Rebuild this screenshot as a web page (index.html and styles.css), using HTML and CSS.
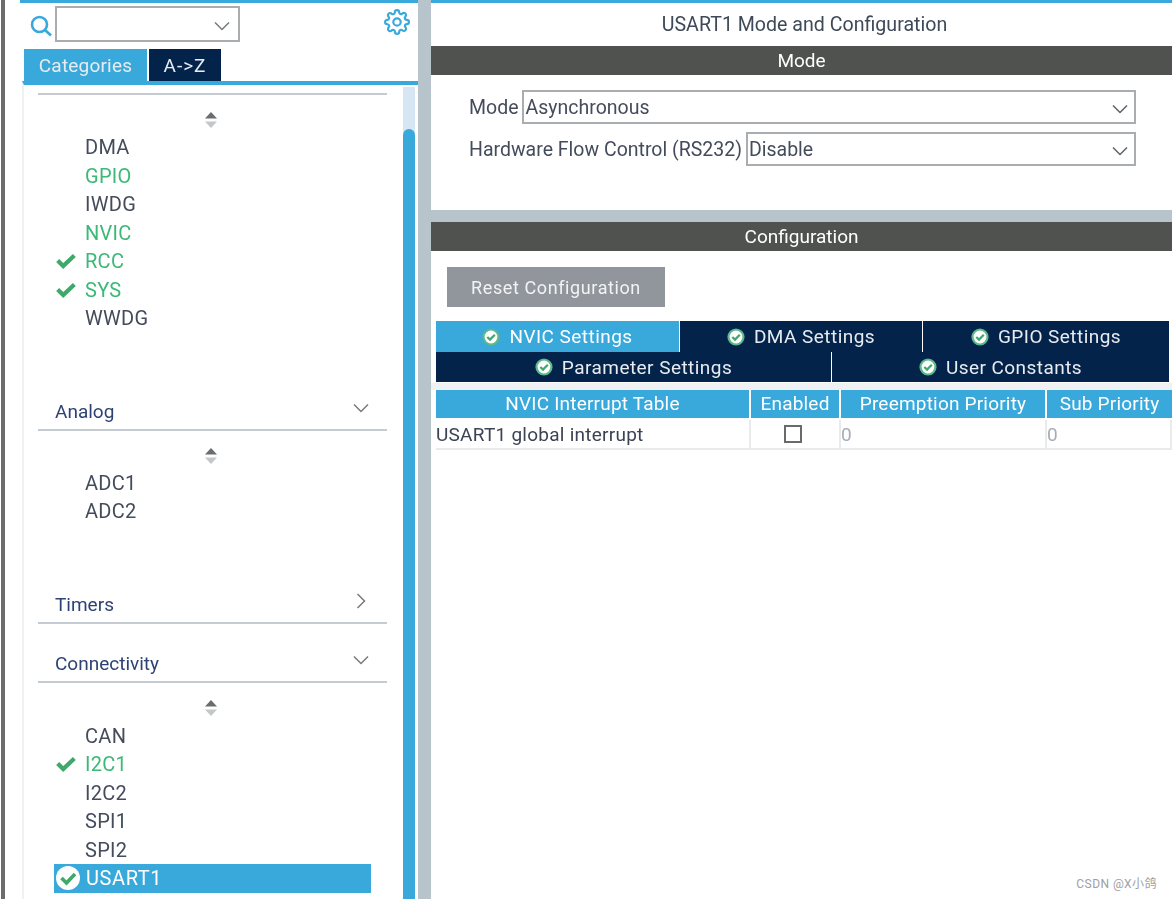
FILE: index.html
```html
<!DOCTYPE html>
<html lang="en">
<head>
<meta charset="utf-8">
<title>USART1 Mode and Configuration</title>
<link rel="stylesheet" href="styles.css">
</head>
<body>
<svg class="defs" width="0" height="0">
  <symbol id="chev-d" viewBox="0 0 16 10"><path d="M1 1.5 8 8.5 15 1.5" fill="none" stroke="currentColor" stroke-width="1.5"/></symbol>
  <symbol id="chev-r" viewBox="0 0 10 16"><path d="M1.5 1 8.5 8 1.5 15" fill="none" stroke="currentColor" stroke-width="1.5"/></symbol>
  <symbol id="sort" viewBox="0 0 12 16"><path d="M6 0 12 6.5H0Z" fill="#6a6c6e"/><path d="M0 9.5H12L6 16Z" fill="#c4c6c8"/></symbol>
  <symbol id="tick" viewBox="0 0 18 14"><path d="M1.5 6.5 6.5 11.5 16.5 2" fill="none" stroke="#3fa86b" stroke-width="3.8"/></symbol>
  <symbol id="ok" viewBox="0 0 18 18"><circle cx="9" cy="9" r="8.6" fill="#5cb98a"/><circle cx="9" cy="9" r="6.4" fill="#fff"/><path d="M5.3 9 8 11.6 12.8 6.8" fill="none" stroke="#3fa86b" stroke-width="2.2"/></symbol>
  <symbol id="ok-big" viewBox="0 0 24 24"><circle cx="12" cy="12" r="12" fill="#fff"/><path d="M5.5 12 10.5 17 19 8" fill="none" stroke="#3fa86b" stroke-width="3.6"/></symbol>
</svg>
<div class="app">
  <div class="edge"></div>
  <aside class="side">
    <div class="search">
      <svg class="lens" viewBox="0 0 22 22"><circle cx="9.5" cy="9.5" r="7.5" fill="none" stroke="#39a9dc" stroke-width="2.6"/><path d="M15 15 21 20.5" stroke="#39a9dc" stroke-width="2.8"/></svg>
      <div class="combo"><svg class="chev"><use href="#chev-d"/></svg></div>
      <svg class="gear" viewBox="0 0 24 24" fill="none" stroke="#39a9dc" stroke-width="2"><circle cx="12" cy="12" r="3.4"/><path d="M19.4 15a1.65 1.65 0 0 0 .33 1.82l.06.06a2 2 0 0 1 0 2.83 2 2 0 0 1-2.83 0l-.06-.06a1.65 1.65 0 0 0-1.82-.33 1.65 1.65 0 0 0-1 1.51V21a2 2 0 0 1-2 2 2 2 0 0 1-2-2v-.09A1.65 1.65 0 0 0 9 19.4a1.65 1.65 0 0 0-1.82.33l-.06.06a2 2 0 0 1-2.83 0 2 2 0 0 1 0-2.83l.06-.06a1.65 1.65 0 0 0 .33-1.82 1.65 1.65 0 0 0-1.51-1H3a2 2 0 0 1-2-2 2 2 0 0 1 2-2h.09A1.65 1.65 0 0 0 4.6 9a1.65 1.65 0 0 0-.33-1.82l-.06-.06a2 2 0 0 1 0-2.83 2 2 0 0 1 2.83 0l.06.06a1.65 1.65 0 0 0 1.82.33H9a1.65 1.65 0 0 0 1-1.51V3a2 2 0 0 1 2-2 2 2 0 0 1 2 2v.09a1.65 1.65 0 0 0 1 1.51 1.65 1.65 0 0 0 1.82-.33l.06-.06a2 2 0 0 1 2.83 0 2 2 0 0 1 0 2.83l-.06.06a1.65 1.65 0 0 0-.33 1.82V9a1.65 1.65 0 0 0 1.51 1H21a2 2 0 0 1 2 2 2 2 0 0 1-2 2h-.09a1.65 1.65 0 0 0-1.51 1z"/></svg>
    </div>
    <div class="cat-tabs">
      <div class="cat-tab on">Categories</div>
      <div class="cat-tab">A-&gt;Z</div>
    </div>
    <div class="tree">
      <div class="tree-body">
        <div class="rule first"></div>
        <div class="sorter"><svg><use href="#sort"/></svg></div>
        <ul class="items">
          <li>DMA</li>
          <li class="good">GPIO</li>
          <li>IWDG</li>
          <li class="good">NVIC</li>
          <li class="good"><svg class="tick"><use href="#tick"/></svg>RCC</li>
          <li class="good"><svg class="tick"><use href="#tick"/></svg>SYS</li>
          <li>WWDG</li>
        </ul>
        <div class="group g-analog"><span>Analog</span><svg class="g-d"><use href="#chev-d"/></svg></div>
        <div class="sorter"><svg><use href="#sort"/></svg></div>
        <ul class="items">
          <li>ADC1</li>
          <li>ADC2</li>
        </ul>
        <div class="group g-timers"><span>Timers</span><svg class="g-r"><use href="#chev-r"/></svg></div>
        <div class="group g-conn"><span>Connectivity</span><svg class="g-d"><use href="#chev-d"/></svg></div>
        <div class="sorter s3"><svg><use href="#sort"/></svg></div>
        <ul class="items">
          <li>CAN</li>
          <li class="good"><svg class="tick"><use href="#tick"/></svg>I2C1</li>
          <li>I2C2</li>
          <li>SPI1</li>
          <li>SPI2</li>
          <li class="sel"><svg class="okbig"><use href="#ok-big"/></svg>USART1</li>
          <li>USART2</li>
        </ul>
      </div>
      <div class="scroll"><div class="thumb"></div></div>
    </div>
  </aside>
  <div class="gutter"></div>
  <main class="main">
    <section class="mode">
      <h1 class="title">USART1 Mode and Configuration</h1>
      <h2 class="bar">Mode</h2>
      <div class="fields">
        <div class="field"><label>Mode</label><div class="select">Asynchronous<svg class="chev"><use href="#chev-d"/></svg></div></div>
        <div class="field"><label>Hardware Flow Control (RS232)</label><div class="select">Disable<svg class="chev"><use href="#chev-d"/></svg></div></div>
      </div>
    </section>
    <section class="config">
      <h2 class="bar">Configuration</h2>
      <button class="reset" type="button">Reset Configuration</button>
      <div class="tabs">
        <div class="tab-row r1">
          <div class="tab on"><svg class="ok"><use href="#ok"/></svg>NVIC Settings</div>
          <div class="tab"><svg class="ok"><use href="#ok"/></svg>DMA Settings</div>
          <div class="tab"><svg class="ok"><use href="#ok"/></svg>GPIO Settings</div>
        </div>
        <div class="tab-row r2">
          <div class="tab"><svg class="ok"><use href="#ok"/></svg>Parameter Settings</div>
          <div class="tab"><svg class="ok"><use href="#ok"/></svg>User Constants</div>
        </div>
      </div>
      <div class="table">
        <div class="th">NVIC Interrupt Table</div>
        <div class="th">Enabled</div>
        <div class="th">Preemption Priority</div>
        <div class="th">Sub Priority</div>
        <div class="td">USART1 global interrupt</div>
        <div class="td center"><span class="check"></span></div>
        <div class="td num">0</div>
        <div class="td num">0</div>
      </div>
    </section>
  </main>
</div>
<div class="mark">CSDN @X小鸽</div>
</body>
</html>
```
FILE: styles.css
```css
* { box-sizing: border-box; }
html, body { margin: 0; height: 100%; overflow: hidden; background: #fff; }
body { font-family: Roboto, "Noto Sans CJK SC", sans-serif; color: #444c5c; }
.defs { position: absolute; }
h1, h2, ul { margin: 0; padding: 0; font-weight: 400; list-style: none; }

.app { display: grid; grid-template-columns: 20px 398px 13px 1fr; height: 899px; filter: blur(0.35px); }
.edge { border-left: 1px solid #fff; background: linear-gradient(90deg, #6c6c6c 0 4px, #fff 4px); }

.side { border-top: 3px solid #39a9dc; display: flex; flex-direction: column; height: 899px; overflow: hidden; }
.search { display: flex; align-items: flex-start; height: 46px; padding: 3px 0 0 10px; }
.lens { width: 22px; height: 22px; margin-top: 9px; }
.combo { width: 185px; height: 36px; margin-left: 3px; border: 2px solid #a9adb0; position: relative; }
.combo .chev { position: absolute; right: 8px; top: 13px; width: 16px; height: 10px; color: #77797b; }
.gear { width: 26px; height: 26px; margin: 3px 0 0 144px; }

.cat-tabs { display: flex; gap: 2px; height: 32px; padding-left: 4px; }
.cat-tab { height: 32px; line-height: 33px; width: 72px; text-align: center; background: #03234b; color: #e8ecf0; font-size: 19px; letter-spacing: 1px; }
.cat-tab.on { width: 123px; background: #39a9dc; letter-spacing: 0.2px; }

.tree { flex: 1; display: flex; margin-left: 2px; border-top: 4px solid #39a9dc; border-left: 2px solid #f0f1f2; min-height: 0; }
.tree-body { width: 379px; padding-left: 14px; }
.scroll { width: 12px; margin-top: 2px; background: #d6e6f3; padding-top: 42px; }
.thumb { height: 100%; background: #39a9dc; border-radius: 6px 6px 0 0; }

.rule { width: 349px; height: 2px; background: #c4cbd2; }
.first { margin-top: 8px; }
.sorter { display: flex; justify-content: center; width: 345px; height: 38px; padding-top: 17px; }
.sorter.s3 { height: 39px; }
.sorter svg { width: 12px; height: 16px; }
.items li { position: relative; height: 28.5px; line-height: 28.5px; padding-left: 47px; font-size: 20px; letter-spacing: 0.3px; }
.items .good { color: #3cb878; }
.tick { position: absolute; left: 18px; top: 6px; width: 20px; height: 16px; }
.items .sel { margin-left: 16px; width: 317px; padding-left: 32px; background: #39a9dc; color: #fff; letter-spacing: 0.6px; }
.okbig { position: absolute; left: 2px; top: 2px; width: 24px; height: 24px; }

.group { display: flex; justify-content: space-between; align-items: center; width: 349px; border-bottom: 2px solid #c4cbd2; padding: 0 18px 4px 17px; font-size: 19px; color: #2d4373; height: 32px; }
.group span { line-height: 28px; }
.g-d { width: 16px; height: 10px; margin-bottom: 8px; color: #77797b; }
.g-r { width: 10px; height: 16px; margin: 0 3px 8px 0; color: #77797b; }
.g-analog { margin-top: 66px; }
.g-timers { margin-top: 66px; }
.g-conn { margin-top: 27px; }

.gutter { background: #b8c4cc; }

.main { border-top: 3px solid #39a9dc; display: flex; flex-direction: column; height: 899px; min-width: 0; }
.mode { height: 219px; border-bottom: 12px solid #b8c4cc; }
.title { height: 43px; text-align: center; line-height: 44px; font-size: 19.6px; color: #3f4a58; padding-left: 6px; }
.bar { height: 29px; background: #505250; color: #fff; text-align: center; line-height: 30px; font-size: 19px; }
.fields { padding: 15px 36px 0 38px; }
.field { display: flex; align-items: center; height: 34px; margin-bottom: 8px; }
.field label { font-size: 19.5px; white-space: nowrap; margin-right: 4px; }
.select { flex: 1; height: 34px; line-height: 31px; border: 2px solid #a9adb0; padding-left: 1px; font-size: 19.5px; position: relative; }
.select .chev { position: absolute; right: 6px; top: 12px; width: 16px; height: 10px; color: #5f6264; }

.config { flex: 1; }
.reset { display: block; width: 218px; height: 40px; margin: 16px 0 14px 16px; background: #90969b; border: 0; color: #f2f3f4; font: 18px Roboto, sans-serif; letter-spacing: 0.6px; padding: 0; }
.tabs { padding: 0 2px 0 5px; }
.tab-row { display: grid; gap: 1px; }
.r1 { grid-template-columns: 243px 242px 246px; height: 31px; }
.r2 { grid-template-columns: 395px 337px; height: 30px; }
.tab { display: flex; align-items: center; justify-content: center; gap: 9px; background: #03234b; color: #e8ecf0; font-size: 19px; letter-spacing: 0.45px; }
.tab.on { background: #39a9dc; color: #fff; }
.ok { width: 18px; height: 18px; }

.table { display: grid; grid-template-columns: 315px 90px 206px 1fr; grid-template-rows: 31px 29px; margin-top: 1px; padding: 7px 0 0 5px; background: linear-gradient(#f0f1f2 7px, #fff 7px); height: 70px; }
.th { background: #39a9dc; color: #fff; font-size: 19px; letter-spacing: 0.2px; text-align: center; line-height: 28px; height: 28px; margin-right: 2px; white-space: nowrap; overflow: hidden; }
.table .th:nth-child(4) { margin-right: 0; }
.td { font-size: 19px; line-height: 29px; letter-spacing: 0.25px; border-bottom: 2px solid #e8eaec; border-right: 2px solid #e8eaec; height: 30px; margin-top: -1px; white-space: nowrap; color: #3b4354; }
.table .td:first-of-type { margin-left: -5px; padding-left: 5px; }
.center { display: flex; justify-content: center; align-items: center; }
.check { width: 18px; height: 18px; margin-right: 4px; border: 2px solid #6a6a6a; background: #fff; }
.num { color: #a6adb8; padding-left: 0; }

.mark { position: absolute; right: 15px; bottom: 8px; font-size: 12px; letter-spacing: 0.45px; color: #a0a0a0; }
```
